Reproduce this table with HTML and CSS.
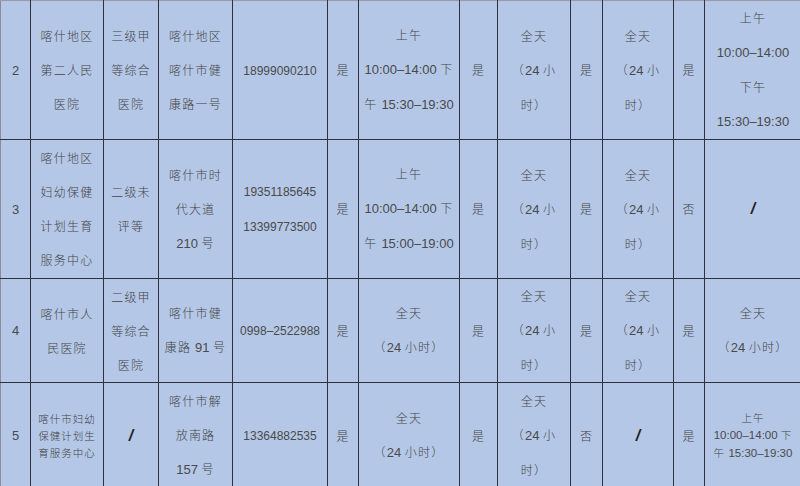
FILE: index.html
```html
<!DOCTYPE html>
<html lang="zh">
<head>
<meta charset="utf-8">
<link rel="stylesheet" href="styles.css">
</head>
<body>
<table class="grid">
  <colgroup>
    <col class="c1"><col class="c2"><col class="c3"><col class="c4"><col class="c5"><col class="c6"><col class="c7"><col class="c8"><col class="c9"><col class="c10"><col class="c11"><col class="c12"><col class="c13">
  </colgroup>
  <tr class="r-tall">
    <td><span class="n">2</span></td>
    <td>喀什地区<br>第二人民<br>医院</td>
    <td>三级甲<br>等综合<br>医院</td>
    <td>喀什地区<br>喀什市健<br>康路一号</td>
    <td><span class="n ph">18999090210</span></td>
    <td>是</td>
    <td>上午<br><span class="n">10:00–14:00 </span>下<br>午 <span class="n">15:30–19:30</span></td>
    <td>是</td>
    <td>全天<br>（<span class="n">24 </span>小<br>时）</td>
    <td>是</td>
    <td>全天<br>（<span class="n">24 </span>小<br>时）</td>
    <td>是</td>
    <td>上午<br><span class="n">10:00–14:00</span><br>下午<br><span class="n">15:30–19:30</span></td>
  </tr>
  <tr class="r-tall">
    <td><span class="n">3</span></td>
    <td>喀什地区<br>妇幼保健<br>计划生育<br>服务中心</td>
    <td>二级未<br>评等</td>
    <td>喀什市时<br>代大道<br><span class="n">210 </span>号</td>
    <td><span class="n ph">19351185645<br>13399773500</span></td>
    <td>是</td>
    <td>上午<br><span class="n">10:00–14:00 </span>下<br>午 <span class="n">15:00–19:00</span></td>
    <td>是</td>
    <td>全天<br>（<span class="n">24 </span>小<br>时）</td>
    <td>是</td>
    <td>全天<br>（<span class="n">24 </span>小<br>时）</td>
    <td>否</td>
    <td><span class="slash">/</span></td>
  </tr>
  <tr class="r-mid">
    <td><span class="n">4</span></td>
    <td>喀什市人<br>民医院</td>
    <td>二级甲<br>等综合<br>医院</td>
    <td>喀什市健<br>康路 <span class="n">91 </span>号</td>
    <td><span class="n ph">0998–2522988</span></td>
    <td>是</td>
    <td>全天<br>（<span class="n">24 </span>小时）</td>
    <td>是</td>
    <td>全天<br>（<span class="n">24 </span>小<br>时）</td>
    <td>是</td>
    <td>全天<br>（<span class="n">24 </span>小<br>时）</td>
    <td>是</td>
    <td>全天<br>（<span class="n">24 </span>小时）</td>
  </tr>
  <tr class="r-last">
    <td><span class="n">5</span></td>
    <td class="small">喀什市妇幼<br>保健计划生<br>育服务中心</td>
    <td><span class="slash">/</span></td>
    <td>喀什市解<br>放南路<br><span class="n">157 </span>号</td>
    <td><span class="n ph">13364882535</span></td>
    <td>是</td>
    <td>全天<br>（<span class="n">24 </span>小时）</td>
    <td>是</td>
    <td>全天<br>（<span class="n">24 </span>小<br>时）</td>
    <td>否</td>
    <td><span class="slash">/</span></td>
    <td>是</td>
    <td class="small">上午<br><span class="n">10:00–14:00 </span>下<br>午 <span class="n">15:30–19:30</span></td>
  </tr>
</table>
</body>
</html>
```

FILE: styles.css
```css
html, body {
  margin: 0;
  padding: 0;
  background: #b4c7e7;
  overflow: hidden;
}

.grid {
  border-collapse: collapse;
  table-layout: fixed;
  width: 801px;
  background: #b4c7e7;
  border-top: 1px solid #9a9aa4;
  font-family: "Noto Sans CJK SC", "Liberation Sans", sans-serif;
  color: #454545;
  font-size: 12px;
  letter-spacing: 1.2px;
}

.c1 { width: 30px; }
.c2 { width: 73px; }
.c3 { width: 55px; }
.c4 { width: 74px; }
.c5 { width: 95px; }
.c6 { width: 31px; }
.c7 { width: 101px; }
.c8 { width: 38px; }
.c9 { width: 73px; }
.c10 { width: 32px; }
.c11 { width: 71px; }
.c12 { width: 31px; }
.c13 { width: 97px; }

.grid td {
  border: 1px solid #2f3140;
  padding: 0;
  text-align: center;
  vertical-align: middle;
  line-height: 34px;
  font-weight: 300;
  overflow: hidden;
  white-space: nowrap;
}

.grid tr:first-child td { border-top-color: #9a9aa4; }
.grid td:first-child { border-left-color: #8a8c98; }

.r-tall { height: 139px; }
.r-mid { height: 104px; }
.r-last { height: 106px; }

.n {
  font-family: "Liberation Sans", sans-serif;
  font-size: 13px;
  letter-spacing: 0;
  font-weight: 400;
  color: #4a4a4a;
}

.n.ph {
  font-size: 12px;
}

.grid td.small {
  font-size: 10.5px;
  line-height: 17px;
  letter-spacing: 1px;
}

.grid td.small .n {
  font-size: 11.5px;
}

.slash {
  font-family: "Liberation Sans", sans-serif;
  font-weight: 700;
  font-size: 16px;
  font-style: italic;
  color: #222;
  letter-spacing: 0;
}
```
